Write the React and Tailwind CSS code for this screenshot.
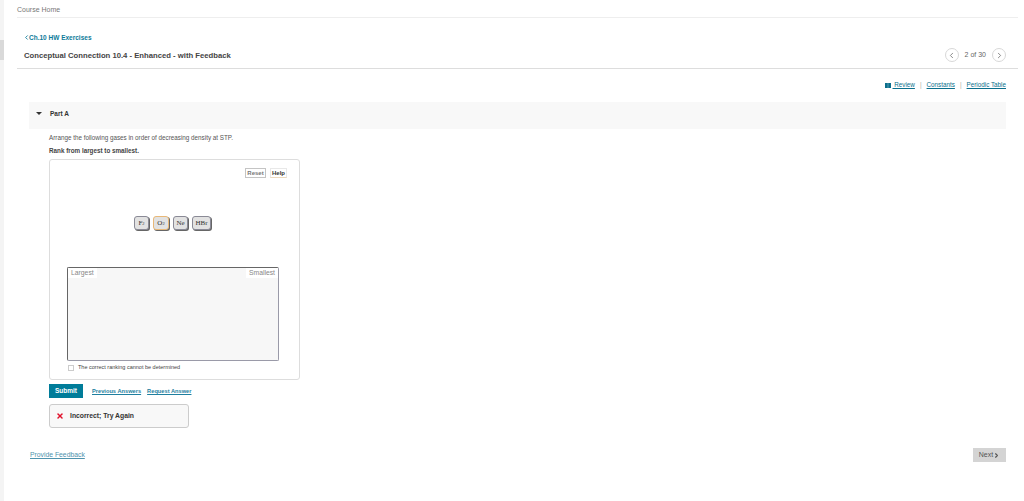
import { ChevronLeft, ChevronRight, X } from "lucide-react"

const tiles = [
    { key: "F", label: "F", sub: "2", border: "border-[#8a8a96]", w: "w-[15px]" },
    { key: "O", label: "O", sub: "2", border: "border-[#e8b878]", w: "w-[16px]" },
    { key: "Ne", label: "Ne", sub: "", border: "border-[#8a8a96]", w: "w-[15px]" },
    { key: "HBr", label: "HBr", sub: "", border: "border-[#8a8a96]", w: "w-[19px]" },
]

function Tile({ label, sub, border, w }) {
    return (
        <div className={`${w} h-[14px] flex items-center justify-center rounded-[3px] border ${border} bg-[#e2e2e2] shadow-[1px_1px_0_#666] font-['Liberation_Serif',serif] text-[7px] leading-none text-[#333]`}>
            {label}
            {sub && <sub className="text-[4.5px]">{sub}</sub>}
        </div>
    )
}

function RoundArrow({ children }) {
    return (
        <div className="w-[14px] h-[14px] rounded-full border border-[#d8d8d8] flex items-center justify-center text-[#666]">
            {children}
        </div>
    )
}

export default function App() {
    return (
        <div className="relative h-[501px] w-[1024px] overflow-hidden bg-white font-['Liberation_Sans',sans-serif] flex">
            {/* left rail */}
            <div className="w-[4px] shrink-0 flex flex-col bg-[#f4f4f4]">
                <div className="h-[40px]" />
                <div className="h-[20px] bg-[#d9d9d9]" />
            </div>

            <div className="w-[1001px] ml-[13px] flex flex-col">
                <div className="h-[18px] border-b border-[#eeeeee] pt-[6px] text-[7px] leading-[8px] text-[#777]">Course Home</div>

                {/* title block */}
                <div className="h-[51px] border-b border-[#dddddd] pl-[7px] pr-[12px] pt-[16px] relative">
                    <div className="flex items-center text-[6.5px] leading-[7px] font-bold text-[#0b7a99]">
                        <ChevronLeft size={7} strokeWidth={3} className="-mr-[1px] -ml-[1px]" />
                        Ch.10 HW Exercises
                    </div>
                    <div className="mt-[9px] text-[7.7px] leading-[11px] font-bold text-[#444]">
                        Conceptual Connection 10.4 - Enhanced - with Feedback
                    </div>
                    <div className="absolute right-[12px] top-[30px] flex items-center gap-[6px] text-[7px] text-[#666]">
                        <RoundArrow><ChevronLeft size={9} /></RoundArrow>
                        <span>2 of 30</span>
                        <RoundArrow><ChevronRight size={9} /></RoundArrow>
                    </div>
                </div>

                {/* tool links */}
                <div className="mt-[12px] mr-[12px] flex justify-end items-center gap-[5px] text-[6.3px] leading-[8px] text-[#0b6f8c]">
                    <svg width="6" height="5" viewBox="0 0 6 5" className="-mr-[3px]">
                        <rect width="6" height="5" fill="#0b6f8c" />
                        <rect x="2.75" width="0.5" height="5" fill="#9cc4d0" />
                    </svg>
                    <span className="underline whitespace-pre"> Review</span>
                    <span className="text-[#aaa]">|</span>
                    <span className="underline">Constants</span>
                    <span className="text-[#aaa]">|</span>
                    <span className="underline">Periodic Table</span>
                </div>

                {/* part */}
                <div className="mt-[13px] ml-[12px] mr-[12px] h-[27px] bg-[#f8f8f8] flex items-center pl-[7px] pb-[4px] gap-[8px]">
                    <div className="w-0 h-0 border-x-[3px] border-x-transparent border-t-[3px] border-t-[#333]" />
                    <span className="text-[6.5px] font-bold text-[#333]">Part A</span>
                </div>

                <div className="ml-[32px] mt-[5px] text-[6.3px] leading-[8px] text-[#555]">
                    Arrange the following gases in order of decreasing density at STP.
                </div>
                <div className="ml-[32px] mt-[5px] text-[6.3px] leading-[8px] font-bold text-[#444]">Rank from largest to smallest.</div>

                {/* ranking widget */}
                <div className="ml-[32px] mt-[4px] w-[251px] h-[221px] rounded-[3px] border border-[#dddddd] flex flex-col">
                    <div className="mt-[8px] mr-[12px] flex justify-end gap-[4px] text-[6px] leading-none font-bold">
                        <div className="h-[10px] w-[21px] border border-[#c4c4c4] flex items-center justify-center text-[#777]">Reset</div>
                        <div className="h-[10px] w-[17px] border border-[#e8e8e8] border-b-[#ecd9bd] flex items-center justify-center text-[#333]">Help</div>
                    </div>
                    <div className="mt-[38px] ml-[84px] flex gap-[4px]">
                        {tiles.map((t) => (
                            <Tile key={t.key} {...t} />
                        ))}
                    </div>
                    <div className="mt-[37px] ml-[17px] w-[212px] h-[94px] rounded-[2px] border border-[#666] border-b-[#9a9aa8] border-r-[#9a9aa8] bg-[#f7f7f7] flex justify-between items-start text-[6.8px] leading-[8px] text-[#888]">
                        <span className="bg-white px-[3px] pt-[1px] pb-[1px]">Largest</span>
                        <span className="bg-white px-[3px] pt-[1px] pb-[1px]">Smallest</span>
                    </div>
                    <div className="mt-[3px] ml-[18px] flex items-center gap-[4px] text-[5.5px] leading-[7px] text-[#444]">
                        <div className="w-[6px] h-[6px] border border-[#ccc]" />
                        The correct ranking cannot be determined
                    </div>
                </div>

                {/* actions */}
                <div className="ml-[32px] mt-[4px] flex items-center text-[5.7px] font-bold text-[#1f7f9f]">
                    <div className="w-[34px] h-[14px] bg-[#007c99] text-white text-[6.5px] flex items-center justify-center">Submit</div>
                    <span className="ml-[9px] underline">Previous Answers</span>
                    <span className="ml-[6px] underline">Request Answer</span>
                </div>

                <div className="ml-[32px] mt-[6px] w-[140px] h-[24px] rounded-[3px] border border-[#cccccc] bg-[#f8f8f8] flex items-center pl-[6px] gap-[6px] text-[6.8px] font-bold text-[#333]">
                    <X size={8} strokeWidth={4.5} className="text-[#e0112b]" />
                    Incorrect; Try Again
                </div>

                <div className="mt-[20px] ml-[13px] mr-[12px] flex justify-between items-center">
                    <span className="text-[6.8px] text-[#4f93ad] underline">Provide Feedback</span>
                    <div className="w-[33px] h-[14px] bg-[#d4d4d4] flex items-center justify-center text-[7px] text-[#555]">
                        Next
                        <ChevronRight size={7} strokeWidth={4} />
                    </div>
                </div>
            </div>
        </div>
    )
}
